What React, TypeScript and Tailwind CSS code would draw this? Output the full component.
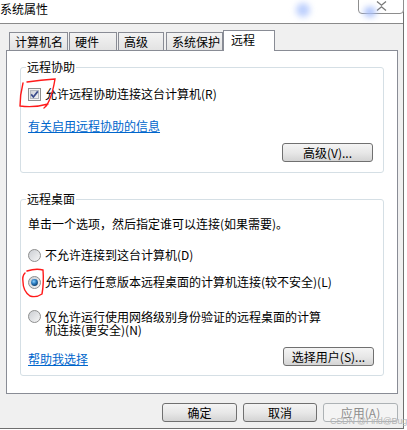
import React from "react";

function CheckBox() {
  return (
    <svg width="13" height="13" viewBox="0 0 13 13" className="shrink-0">
      <defs>
        <linearGradient id="cbin" x1="0" y1="0" x2="1" y2="1">
          <stop offset="0" stopColor="#cbcfd5" />
          <stop offset="1" stopColor="#f6f6f6" />
        </linearGradient>
      </defs>
      <rect x="0.5" y="0.5" width="12" height="12" fill="#f4f4f4" stroke="#8e8f8f" />
      <rect x="2.5" y="2.5" width="8" height="8" fill="url(#cbin)" stroke="#b4b9c0" />
      <path d="M3.2 6.4 L5.4 9 L9.8 3.4" stroke="#3b4d8c" strokeWidth="1.7" fill="none" />
    </svg>
  );
}

function Radio({ checked }: { checked?: boolean }) {
  return (
    <svg width="13" height="13" viewBox="0 0 13 13" className="shrink-0">
      <defs>
        <linearGradient id="rbg" x1="0" y1="0" x2="1" y2="1">
          <stop offset="0" stopColor="#c9ccd1" />
          <stop offset="1" stopColor="#f7f7f7" />
        </linearGradient>
        <radialGradient id="rdot" cx="0.4" cy="0.35" r="0.7">
          <stop offset="0" stopColor="#8fd3ff" />
          <stop offset="0.5" stopColor="#2a7bbf" />
          <stop offset="1" stopColor="#0d3a66" />
        </radialGradient>
      </defs>
      <circle cx="6.5" cy="6.5" r="6" fill="url(#rbg)" stroke="#8e8f8f" />
      {checked && <circle cx="6.5" cy="6.5" r="3.4" fill="url(#rdot)" />}
    </svg>
  );
}

function Button({
  children,
  disabled,
  className = "",
}: {
  children: React.ReactNode;
  disabled?: boolean;
  className?: string;
}) {
  return (
    <div
      className={
        "h-[19px] flex items-center justify-center rounded-[3px] border leading-[14px] " +
        (disabled
          ? "border-[#adb2b5] bg-[#f4f4f4] text-[#8d8d8d] "
          : "border-[#707070] bg-linear-to-b from-[#f4f4f4] via-[#e8e8e8] to-[#d4d4d4] text-black ") +
        className
      }
    >
      {children}
    </div>
  );
}

function GroupBox({
  title,
  className = "",
  children,
}: {
  title: string;
  className?: string;
  children: React.ReactNode;
}) {
  return (
    <div className={"mx-[13px] flex flex-col rounded-[3px] border border-[#d5dfe5] " + className}>
      <div className="-mt-[8px] ml-[5px] w-fit bg-white px-[1px] leading-[14px]">{title}</div>
      {children}
    </div>
  );
}

const tabs = [
  { label: "计算机名", cls: "ml-[3px] w-[59px]" },
  { label: "硬件", cls: "ml-[1px] w-[48px]" },
  { label: "高级", cls: "ml-[1px] w-[46px]" },
  { label: "系统保护", cls: "ml-[2px] w-[57px]" },
];

export default function App() {
  return (
    <div className="relative h-[430px] w-[407px] overflow-hidden bg-white font-['Noto_Sans_CJK_SC','Noto_Sans',sans-serif] text-[12px] text-black">
      <div className="flex h-[429px] w-[404px] flex-col border-r border-b border-[#6f6f6f] bg-[#f0f0f0]">
        {/* title bar */}
        <div className="relative h-[24px] shrink-0 border-b border-[#8a8a8a] bg-white">
          <div className="pt-[2px] leading-[14px]">系统属性</div>
          <div className="absolute left-[296px] top-[3px] h-[14px] w-[14px] rounded-full bg-[#bccffd] blur-[3px]" />
          <div className="absolute left-[358px] top-[-3px] flex h-[17px] w-[46px] items-end justify-center rounded-b-[4px] border border-[#8e8e8e] bg-white pb-[2px]">
            <svg width="11" height="10" viewBox="0 0 11 10">
              <path d="M1 0.5 L5.5 4.2 L10 0.5 M1 9.5 L5.5 5.8 L10 9.5" stroke="#777" strokeWidth="1.3" fill="none" />
            </svg>
          </div>
          <div className="absolute left-[364px] top-[7px] h-[10px] w-[12px] rounded-full bg-[#a9c0fb] blur-[3px]" />
        </div>

        {/* tabs */}
        <div className="ml-[6px] mt-[6px] flex h-[20px] items-end">
          {tabs.map((t) => (
            <div
              key={t.label}
              className={
                "flex h-[18px] items-center border border-b-0 border-[#898c95] bg-linear-to-b from-[#f3f3f3] to-[#e3e3e3] pl-[5px] leading-[14px] " +
                t.cls
              }
            >
              {t.label}
            </div>
          ))}
          <div className="relative z-10 -mb-px flex h-[21px] w-[52px] items-start border border-b-0 border-[#898c95] bg-white pl-[7px] pt-[2px] leading-[14px]">
            远程
          </div>
        </div>

        {/* panel */}
        <div className="ml-[6px] flex h-[344px] w-[392px] flex-col border border-[#898c95] bg-white">
          <GroupBox title="远程协助" className="mt-[16px] h-[106px]">
            <div className="ml-[7px] mt-[13px] flex h-[14px] items-center gap-[4px] leading-[14px]">
              <CheckBox />
              <span>允许远程协助连接这台计算机(R)</span>
            </div>
            <div className="ml-[7px] mt-[18px] w-fit leading-[14px] text-[#0066cc] underline">
              有关启用远程协助的信息
            </div>
            <Button className="mr-[10px] mt-[10px] w-[91px] self-end">高级(V)...</Button>
          </GroupBox>

          <GroupBox title="远程桌面" className="mt-[26px] h-[177px]">
            <div className="ml-[7px] mt-[11px] leading-[14px]">单击一个选项，然后指定谁可以连接(如果需要)。</div>
            <div className="ml-[7px] mt-[17px] flex h-[14px] items-center gap-[4px] leading-[14px]">
              <Radio />
              <span>不允许连接到这台计算机(D)</span>
            </div>
            <div className="ml-[7px] mt-[13px] flex h-[14px] items-center gap-[4px] leading-[14px]">
              <Radio checked />
              <span>允许运行任意版本远程桌面的计算机连接(较不安全)(L)</span>
            </div>
            <div className="ml-[7px] mt-[21px] flex items-start gap-[4px] leading-[13px]">
              <Radio />
              <span className="flex w-[300px] flex-col">
                <span>仅允许运行使用网络级别身份验证的远程桌面的计算</span>
                <span>机连接(更安全)(N)</span>
              </span>
            </div>
            <div className="ml-[7px] mr-[9px] mt-[11px] flex items-end justify-between">
              <span className="leading-[14px] text-[#0066cc] underline">帮助我选择</span>
              <Button className="w-[91px]">选择用户(S)...</Button>
            </div>
          </GroupBox>
        </div>

        {/* dialog buttons */}
        <div className="ml-[162px] mt-[9px] flex gap-[6px]">
          <Button className="w-[75px]">确定</Button>
          <Button className="w-[74px]">取消</Button>
          <Button disabled className="w-[75px]">应用(A)</Button>
        </div>
      </div>

      {/* red hand-drawn marks */}
      <svg className="pointer-events-none absolute inset-0" width="407" height="430">
        <path
          d="M27 82 Q41 80 55 79 Q53 92 49 101 Q47 106 44 108 M23 83 Q20 95 20 106 Q34 108 48 104"
          stroke="#ff1a1a"
          strokeWidth="1.4"
          fill="none"
          strokeLinecap="round"
        />
        <path
          d="M27 271 Q36 268 43 270 Q44 283 42 294 Q36 298 30 296 Q23 291 23 282 Q22 276 25 273"
          stroke="#ff1a1a"
          strokeWidth="1.4"
          fill="none"
          strokeLinecap="round"
        />
      </svg>

      <div className="pointer-events-none absolute left-[330px] top-[415px] whitespace-nowrap font-['Liberation_Sans',sans-serif] text-[9px] leading-[12px] tracking-[-0.2px] text-[#b5b5b5]">
        CSDN @Find@Bug
      </div>
    </div>
  );
}
